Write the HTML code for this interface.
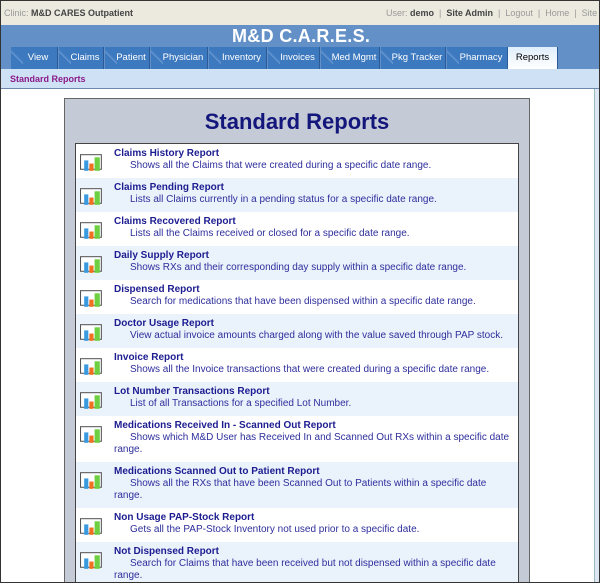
<!DOCTYPE html>
<html><head><meta charset="utf-8"><style>
*{margin:0;padding:0;box-sizing:border-box}
html,body{width:600px;height:583px;overflow:hidden;background:#fff}
body{font-family:"Liberation Sans",Arial,sans-serif}
#w{position:relative;width:600px;height:583px;overflow:hidden;border:1px solid #333}
.top{position:absolute;left:0;top:0;width:600px;height:24px;background:#ece9df;font-size:9px;color:#999}
.top b{color:#444}
.hdr{position:absolute;left:0;top:24px;width:600px;height:44px;background:#6390c6}
.title{position:absolute;left:231px;top:1px;color:#fff;font-weight:bold;font-size:18px;letter-spacing:.3px}
.tab{position:absolute;top:22px;height:22px;background:#3d79bf;color:#fff;font-size:9.5px;text-align:center;line-height:22px;border-right:1px solid #2a5a98;padding-left:8px}
.tab:before{content:"";position:absolute;left:0;top:0;width:12px;height:22px;background:linear-gradient(45deg,transparent 48%,#6a9bd4 50%,#4d86c8 55%,transparent 60%)}
.tab.on{background:linear-gradient(#dfeefb,#fff);color:#000;padding-left:0}
.tab.on:before{display:none}
.sub{position:absolute;left:0;top:68px;width:600px;height:20px;background:#cfe1f5;border-bottom:1px solid #6d88ad;color:#8a1a8a;font-weight:bold;font-size:9px;line-height:20px;padding-left:9px}
.panel{position:absolute;left:63px;top:97px;width:466px;height:500px;background:#c5cad7;border:1px solid #666}
.ptitle{position:absolute;left:0;width:464px;top:10px;text-align:center;color:#13167a;font-weight:bold;font-size:22px}
.list{position:absolute;left:10px;top:44px;width:444px;height:460px;background:#fff;border:1px solid #444;overflow:hidden}
.row{position:relative;padding:4px 8px 0 38px;font-size:10px}
.row:nth-child(even){background:#eaf2fb}
.row h4{color:#1c1c90;font-size:10px;font-weight:bold;line-height:12px}
.row p{color:#2e2e9c;text-indent:16px;line-height:12px;padding-bottom:6px;font-size:10px}
.ic{position:absolute;left:4px;top:8px;width:25px;height:21px}
.sb{position:absolute;right:0;top:88px;width:5px;height:495px;background:#dde6f3;border-left:1px solid #9bb}
</style></head><body><div id="w">
<div class="top"><span style="position:absolute;left:3px;top:7px">Clinic: <b>M&amp;D CARES Outpatient</b></span>
<span style="position:absolute;left:385px;top:7px">User: <b>demo</b> &nbsp;|&nbsp; <b>Site Admin</b> &nbsp;|&nbsp; Logout &nbsp;|&nbsp; Home &nbsp;|&nbsp; Site</span></div>
<div class="hdr"><div class="title">M&amp;D C.A.R.E.S.</div>
<div class="tab" style="left:10px;width:47px">View</div>
<div class="tab" style="left:58px;width:45px">Claims</div>
<div class="tab" style="left:104px;width:45px">Patient</div>
<div class="tab" style="left:150px;width:57px">Physician</div>
<div class="tab" style="left:208px;width:58px">Inventory</div>
<div class="tab" style="left:267px;width:52px">Invoices</div>
<div class="tab" style="left:320px;width:59px">Med Mgmt</div>
<div class="tab" style="left:380px;width:65px">Pkg Tracker</div>
<div class="tab" style="left:446px;width:61px">Pharmacy</div>
<div class="tab on" style="left:507px;width:50px">Reports</div>
</div>
<div class="sub">Standard Reports</div>
<div class="panel"><div class="ptitle">Standard Reports</div>
<div class="list" id="l">
<div class="row"><h4>Claims History Report</h4><p>Shows all the Claims that were created during a specific date range.</p></div>
<div class="row"><h4>Claims Pending Report</h4><p>Lists all Claims currently in a pending status for a specific date range.</p></div>
<div class="row"><h4>Claims Recovered Report</h4><p>Lists all the Claims received or closed for a specific date range.</p></div>
<div class="row"><h4>Daily Supply Report</h4><p>Shows RXs and their corresponding day supply within a specific date range.</p></div>
<div class="row"><h4>Dispensed Report</h4><p>Search for medications that have been dispensed within a specific date range.</p></div>
<div class="row"><h4>Doctor Usage Report</h4><p>View actual invoice amounts charged along with the value saved through PAP stock.</p></div>
<div class="row"><h4>Invoice Report</h4><p>Shows all the Invoice transactions that were created during a specific date range.</p></div>
<div class="row"><h4>Lot Number Transactions Report</h4><p>List of all Transactions for a specified Lot Number.</p></div>
<div class="row"><h4>Medications Received In - Scanned Out Report</h4><p>Shows which M&amp;D User has Received In and Scanned Out RXs within a specific date range.</p></div>
<div class="row"><h4>Medications Scanned Out to Patient Report</h4><p>Shows all the RXs that have been Scanned Out to Patients within a specific date range.</p></div>
<div class="row"><h4>Non Usage PAP-Stock Report</h4><p>Gets all the PAP-Stock Inventory not used prior to a specific date.</p></div>
<div class="row"><h4>Not Dispensed Report</h4><p>Search for Claims that have been received but not dispensed within a specific date range.</p></div>
</div></div>
<div class="sb"></div>
</div>
<script>
var svg='<svg class="ic" viewBox="0 0 24 20"><rect x="0.5" y="2.5" width="20" height="14" fill="#fff" stroke="#555"/><rect x="4" y="8" width="4" height="10" fill="#3a9ae0"/><rect x="9" y="11" width="4" height="7" fill="#f07020"/><rect x="14" y="5" width="5" height="13" fill="#6cd040"/></svg>';
document.querySelectorAll('.row').forEach(function(r){r.insertAdjacentHTML('afterbegin',svg)});
</script>
</body></html>
